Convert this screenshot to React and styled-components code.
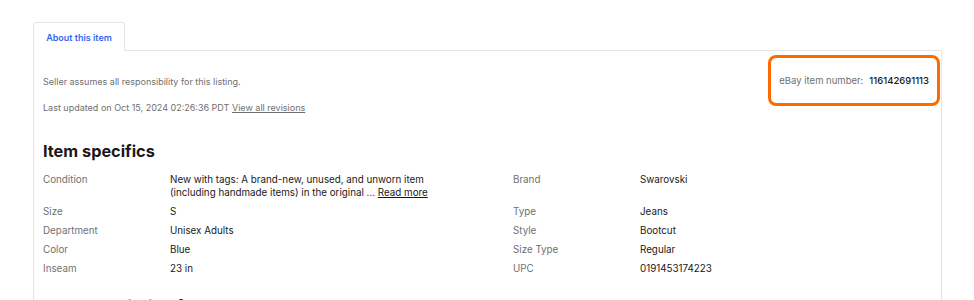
import styled, { createGlobalStyle } from "styled-components"

const Global = createGlobalStyle`
  body {
    margin: 0;
    background: #fff;
    font-family: "Inter", "Open Sans", sans-serif;
    color: #191919;
  }
`

const Page = styled.div`
  padding: 22px 32px 0 33px;
  height: 300px;
  box-sizing: border-box;
  overflow: hidden;
`
const Tabs = styled.div`
  display: flex;
`
const Tab = styled.div`
  width: 92px;
  height: 29px;
  box-sizing: border-box;
  display: flex;
  align-items: center;
  justify-content: center;
  border: 1px solid #e5e5e5;
  border-bottom: none;
  border-radius: 3px 3px 0 0;
  font-size: 9px;
  font-weight: 600;
  color: #3665f3;
  background: #fff;
  position: relative;
  margin-bottom: -1px;
`
const Panel = styled.div`
  border: 1px solid #e5e5e5;
  border-bottom: none;
  padding: 0 1px 0 9px;
`
const Header = styled.div`
  display: flex;
  justify-content: space-between;
  align-items: flex-start;
  padding-top: 4px;
`
const Notes = styled.div`
  display: flex;
  flex-direction: column;
  gap: 13px;
  margin-top: 20px;
`
const Note = styled.div`
  font-size: 9px;
  color: #707070;
  line-height: 13px;
`
const RevLink = styled.a`
  color: #707070;
  text-decoration: underline;
`
const ItemNumber = styled.div`
  display: flex;
  align-items: center;
  gap: 6px;
  height: 51px;
  box-sizing: border-box;
  padding: 0 8px;
  border: 3px solid #ff6a00;
  border-radius: 8px;
  font-size: 9.5px;
  color: #707070;
`
const Number = styled.span`
  color: #191919;
  font-weight: 500;
`
const Heading = styled.h2`
  margin: 27px 0 0;
  font-size: 16.3px;
  font-weight: 700;
  line-height: 20px;
`
const Specs = styled.div`
  display: grid;
  grid-template-columns: 127px 343px 127px 1fr;
  margin-top: 12px;
  row-gap: 6px;
  font-size: 9.8px;
  line-height: 13px;
`
const Label = styled.div`
  color: #707070;
`
const Value = styled.div`
  color: #191919;
`
const ReadMore = styled.a`
  color: #191919;
  text-decoration: underline;
`
const NextHeading = styled(Heading)`
  margin-top: 21px;
`

const specs = [
  ["Condition", null, "Brand", "Swarovski"],
  ["Size", "S", "Type", "Jeans"],
  ["Department", "Unisex Adults", "Style", "Bootcut"],
  ["Color", "Blue", "Size Type", "Regular"],
  ["Inseam", "23 in", "UPC", "0191453174223"],
]

const App = () => {
  return (
    <Page>
      <Global />
      <Tabs>
        <Tab>About this item</Tab>
      </Tabs>
      <Panel>
        <Header>
          <Notes>
            <Note>Seller assumes all responsibility for this listing.</Note>
            <Note>
              Last updated on Oct 15, 2024 02:26:36 PDT <RevLink>View all revisions</RevLink>
            </Note>
          </Notes>
          <ItemNumber>
            eBay item number:<Number>116142691113</Number>
          </ItemNumber>
        </Header>
        <Heading>Item specifics</Heading>
        <Specs>
          {specs.map(([l1, v1, l2, v2]) => (
            <>
              <Label key={l1}>{l1}</Label>
              <Value>
                {v1 ?? (
                  <>
                    New with tags: A brand-new, unused, and unworn item
                    <br />
                    (including handmade items) in the original ... <ReadMore>Read more</ReadMore>
                  </>
                )}
              </Value>
              <Label>{l2}</Label>
              <Value>{v2}</Value>
            </>
          ))}
        </Specs>
        <NextHeading>Item description from the seller</NextHeading>
      </Panel>
    </Page>
  )
}

export default App
